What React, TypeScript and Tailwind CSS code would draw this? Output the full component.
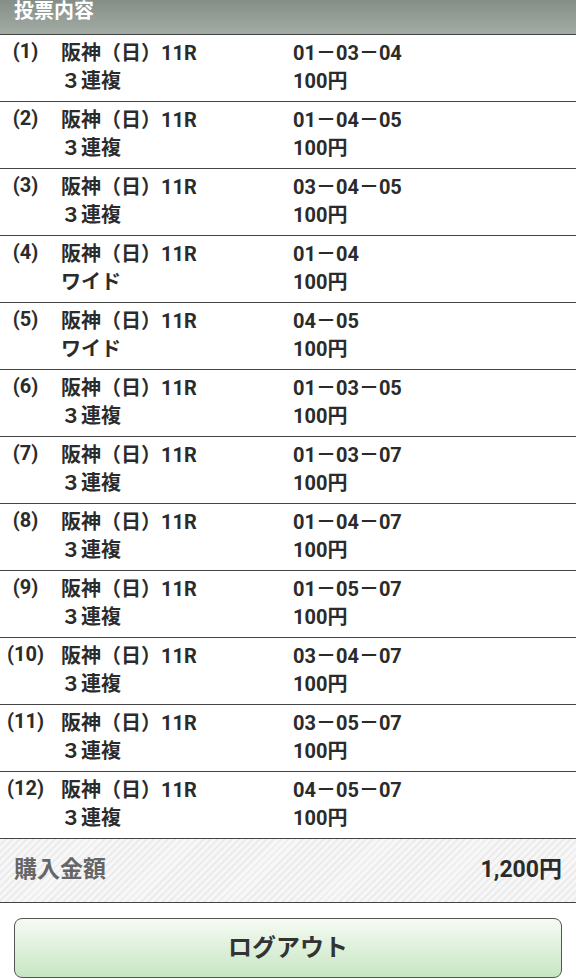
const bets = [
  { no: 1, type: '３連複', combo: '01－03－04' },
  { no: 2, type: '３連複', combo: '01－04－05' },
  { no: 3, type: '３連複', combo: '03－04－05' },
  { no: 4, type: 'ワイド', combo: '01－04' },
  { no: 5, type: 'ワイド', combo: '04－05' },
  { no: 6, type: '３連複', combo: '01－03－05' },
  { no: 7, type: '３連複', combo: '01－03－07' },
  { no: 8, type: '３連複', combo: '01－04－07' },
  { no: 9, type: '３連複', combo: '01－05－07' },
  { no: 10, type: '３連複', combo: '03－04－07' },
  { no: 11, type: '３連複', combo: '03－05－07' },
  { no: 12, type: '３連複', combo: '04－05－07' }
];

const font = { fontFamily: 'Roboto, "Noto Sans CJK JP", sans-serif' };

const BetRow = ({ no, type, combo }: { no: number; type: string; combo: string }) => (
  <div className="flex border-b border-[#444] pt-[4px] pb-[6px] text-[20px] font-bold leading-[28px] text-[#2b2b2b]">
    <div className="w-[51px] text-center -mt-[2px]">({no})</div>
    <div className="w-[232px] ml-[10px]">
      <div>阪神（日）11R</div>
      <div>{type}</div>
    </div>
    <div>
      <div>{combo}</div>
      <div>100円</div>
    </div>
  </div>
);

export default function App() {
  return (
    <div className="w-[576px] min-h-[979px] bg-white" style={font}>
      <div className="h-[35px] border-b border-[#444] bg-gradient-to-b from-[#858d87] to-[#a4aca6] px-[14px]">
        <div className="text-[20px] font-bold leading-[22px] text-white">投票内容</div>
      </div>
      {bets.map((b) => (
        <BetRow key={b.no} {...b} />
      ))}
      <div className="flex h-[64px] items-center justify-between border-b border-[#444] bg-[repeating-linear-gradient(135deg,#f7f7f7_0px,#f7f7f7_3px,#ececec_3px,#ececec_5px)] px-[14px] text-[23px] font-bold">
        <span className="text-[#666]">購入金額</span>
        <span className="text-[#2b2b2b]">1,200円</span>
      </div>
      <div className="px-[14px] pt-[15px]">
        <button
          type="button"
          className="flex h-[60px] w-full items-center justify-center rounded-[8px] border border-[#555] bg-gradient-to-b from-[#f6fbf4] to-[#c6e6c2] text-[24px] font-bold text-[#333]"
        >
          ログアウト
        </button>
      </div>
    </div>
  );
}
